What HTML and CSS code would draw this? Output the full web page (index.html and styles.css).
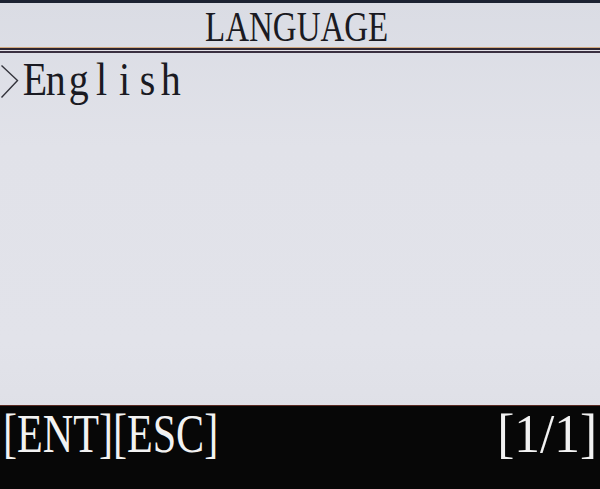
FILE: index.html
```html
<!DOCTYPE html>
<html>
<head>
<meta charset="utf-8">
<link rel="stylesheet" href="styles.css">
</head>
<body>
<div class="screen">
  <div class="strip"></div>
  <div class="title"><span class="title-text">LANGUAGE</span></div>
  <div class="rule rule-a"></div>
  <div class="rule rule-b"></div>
  <div class="content">
    <div class="item">
      <svg class="cursor" width="20" height="36" viewBox="0 0 20 36"><polyline points="1.5,1.5 17.5,16.5 1.5,33.5" fill="none" stroke="#34343c" stroke-width="1.4"/></svg>
      <span class="label"><span class="ch">E</span><span class="ch">n</span><span class="ch">g</span><span class="ch">l</span><span class="ch">i</span><span class="ch">s</span><span class="ch">h</span></span>
    </div>
  </div>
  <div class="footer">
    <span class="keys">[ENT][ESC]</span>
    <span class="page">[1/1]</span>
  </div>
</div>
</body>
</html>
```
FILE: styles.css
```css
html, body {
  margin: 0;
  padding: 0;
}
body {
  width: 600px;
  height: 489px;
  overflow: hidden;
  background: #e0e1e8;
}
.screen {
  width: 600px;
  height: 489px;
  display: flex;
  flex-direction: column;
  font-family: "Liberation Serif", "Times New Roman", serif;
  background: linear-gradient(180deg, #dadce4 0%, #e1e2e9 30%, #e2e3ea 70%, #dcdde4 100%);
}
.strip {
  height: 3px;
  background: #1c2232;
}
.title {
  height: 40px;
  padding-top: 4px;
  line-height: 40px;
  font-size: 42px;
  color: #1a1a22;
  text-align: center;
}
.title-text {
  display: inline-block;
  transform: scaleX(0.785);
  margin-left: -7px;
}
.rule-a {
  border-top: 1px solid #d2aa80;
  height: 2px;
  background: #2e2632;
}
.rule-b {
  border-top: 1px solid #e4e2e8;
  height: 2px;
  background: #3a3040;
}
.content {
  flex: 1;
  padding-top: 3px;
}
.item {
  display: flex;
  align-items: flex-start;
  height: 47px;
}
.cursor {
  margin-top: 8px;
  flex: none;
}
.label {
  margin-left: 1px;
  font-size: 47px;
  line-height: 47px;
  color: #1a1a22;
}
.ch {
  display: inline-block;
  width: 23px;
  text-align: center;
  transform: scaleX(0.85);
}
.footer {
  height: 82px;
  padding-top: 1px;
  border-top: 1px solid #5a2a22;
  background: #070707;
  display: flex;
  justify-content: space-between;
  align-items: flex-start;
  font-size: 54px;
  line-height: 54px;
  color: #f2f2f2;
}
.keys {
  display: inline-block;
  margin-left: 3px;
  transform: scaleX(0.78);
  transform-origin: left center;
}
.page {
  display: inline-block;
  margin-right: 3px;
  transform: scaleX(0.95);
  transform-origin: right center;
}
```
